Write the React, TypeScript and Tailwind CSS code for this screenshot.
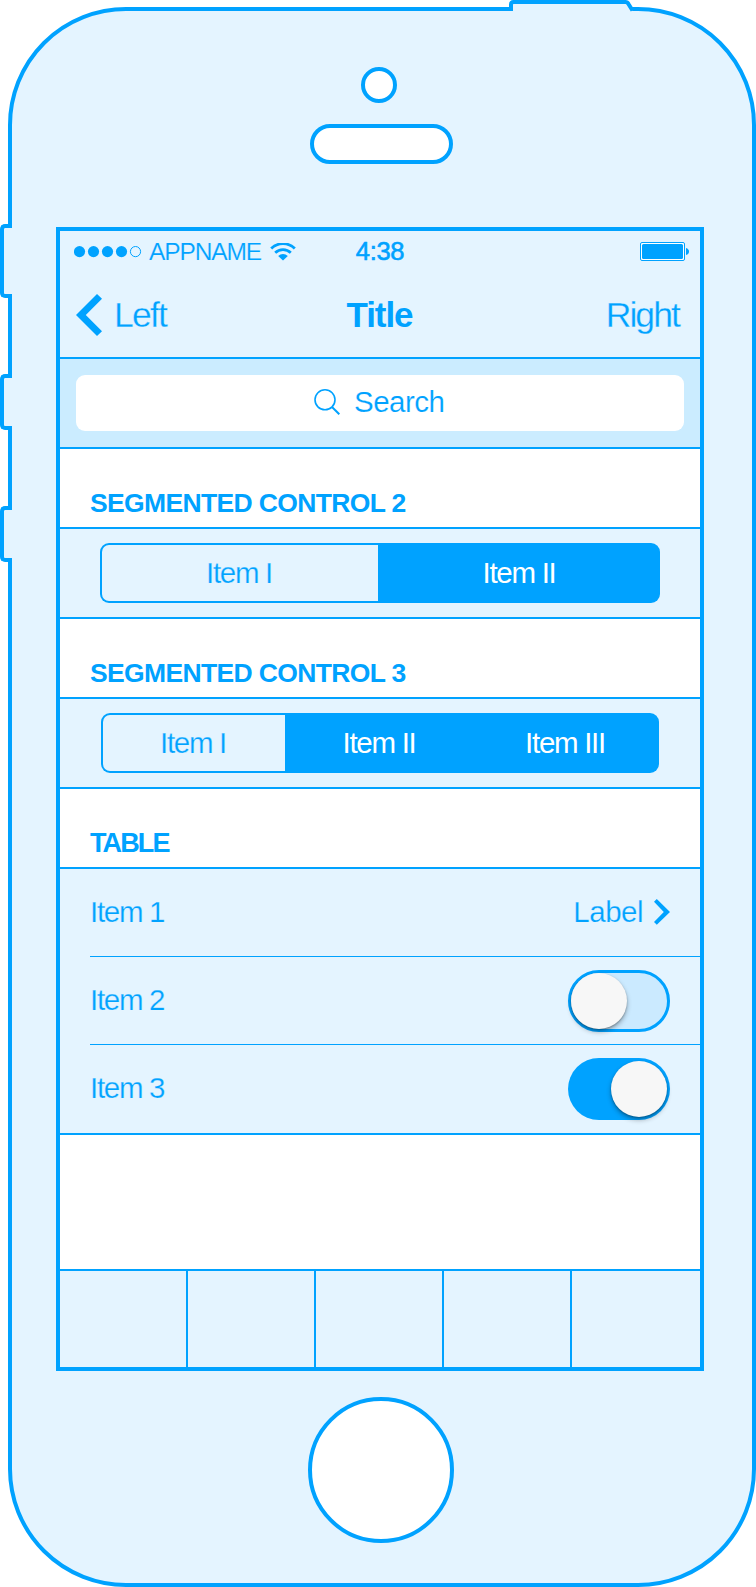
import React from "react";

function StatusBar() {
  return (
    <div className="flex h-[42px] items-center pl-[14px] pr-[11px]">
      <div className="flex flex-1 items-center">
        <svg className="block h-[12px] w-[68px]" viewBox="0 0 68 12" fill="#00a2ff">
          <circle cx="5.5" cy="5.6" r="5.6" />
          <circle cx="19.5" cy="5.6" r="5.6" />
          <circle cx="33.5" cy="5.6" r="5.6" />
          <circle cx="47.5" cy="5.6" r="5.6" />
          <circle cx="61.5" cy="5.6" r="5.1" fill="none" stroke="#00a2ff" strokeWidth="1" />
        </svg>
        <span className="ml-[7px] w-[113px] text-[24.5px] leading-[42px] tracking-[-1.1px] whitespace-nowrap [-webkit-text-stroke:0.15px_#e4f4ff]">
          APPNAME
        </span>
        <svg className="ml-[8px] block h-[18px] w-[26px]" viewBox="0 0 26 18" fill="none" stroke="#00a2ff">
          <path d="M1.2 5.6A16.6 16.6 0 0 1 24.8 5.6" strokeWidth="2.8" />
          <path d="M5.2 9.8A11 11 0 0 1 20.8 9.8" strokeWidth="2.7" />
          <path d="M13 17.4L8.2 13A7 7 0 0 1 17.8 13Z" fill="#00a2ff" stroke="none" />
        </svg>
      </div>
      <span className="mr-[3px] text-[25.5px] leading-[40px] tracking-[-0.3px] pb-[2px] [-webkit-text-stroke:0.6px_#00a2ff]">4:38</span>
      <div className="flex flex-1 justify-end">
        <svg className="-mt-[2px] block h-[19px] w-[49px]" viewBox="0 0 49 19">
          <rect x="0.5" y="0.5" width="44" height="18" rx="1.5" fill="#fff" stroke="#00a2ff" />
          <rect x="2" y="2" width="41" height="15" rx="1.5" fill="#00a2ff" />
          <path d="M46 6Q49 7 49 9.5Q49 12 46 13Z" fill="#00a2ff" />
        </svg>
      </div>
    </div>
  );
}

function NavBar() {
  return (
    <div className="flex h-[84px] items-center pl-[17px] pr-[18px]">
      <div className="flex flex-1 items-center">
        <svg className="-mt-px -ml-px block h-[42px] w-[26px]" viewBox="0 0 26 42" fill="#00a2ff">
          <path d="M21 0L26 4.7L9.8 21L26 37.2L21 42L0 21Z" />
        </svg>
        <span className="ml-[12px] text-[35.5px] leading-[84px] tracking-[-1.8px] [-webkit-text-stroke:0.3px_#e4f4ff]">Left</span>
      </div>
      <span className="text-[35px] leading-[84px] font-bold tracking-[-1.1px]">Title</span>
      <div className="flex flex-1 justify-end">
        <span className="pr-[3px] text-[35.5px] leading-[84px] tracking-[-1.9px] [-webkit-text-stroke:0.3px_#e4f4ff]">Right</span>
      </div>
    </div>
  );
}

function SectionHeading({ tight = false, children }: { tight?: boolean; children: React.ReactNode }) {
  return (
    <div
      className={
        tight
          ? "h-[80px] border-b-2 border-[#00a2ff] bg-white pt-[39px] pl-[30px] text-[27px] leading-[30px] font-bold tracking-[-1.9px]"
          : "h-[80px] border-b-2 border-[#00a2ff] bg-white pt-[39px] pl-[30px] text-[26.5px] leading-[30px] font-bold tracking-[-0.65px]"
      }
    >
      {children}
    </div>
  );
}

function Switch({ on = false }: { on?: boolean }) {
  return (
    <div
      className={
        on
          ? "flex h-[62px] w-[102px] items-center justify-end rounded-full bg-[#00a2ff] px-[3px]"
          : "flex h-[62px] w-[102px] items-center rounded-full border-[3px] border-[#00a2ff] bg-[#cbeaff]"
      }
    >
      <div className="size-[56px] rounded-full bg-[#f7f7f7] shadow-[0_3px_5px_rgba(0,0,0,0.3),0_1px_2px_rgba(0,0,0,0.25)]" />
    </div>
  );
}

const itemText = "text-[29.5px] tracking-[-1.3px]";
const thin = "[-webkit-text-stroke:0.25px_#e4f4ff]";

function Row({ label, last = false, children }: { label: string; last?: boolean; children: React.ReactNode }) {
  return (
    <div
      className={
        last
          ? "ml-[30px] flex h-[88px] items-center justify-between pr-[30px]"
          : "ml-[30px] flex h-[88px] items-center justify-between pr-[30px] shadow-[inset_0_-1px_0_#00a2ff]"
      }
    >
      <span className={`${itemText} ${thin} pb-[2px] leading-[34px]`}>{label}</span>
      {children}
    </div>
  );
}

export default function App() {
  return (
    <div className="relative h-[1587px] w-[756px] bg-white pt-[7px] pl-[8px] font-['Liberation_Sans',Arial,sans-serif] text-[#00a2ff]">
      <div className="flex h-[1580px] w-[748px] flex-col items-center rounded-[118px] border-4 border-[#00a2ff] bg-[#e4f4ff]">
        <div className="mt-[56px] mr-[6px] size-[36px] rounded-full border-4 border-[#00a2ff] bg-white" />
        <div className="mt-[21px] mr-[1px] h-[40px] w-[143px] rounded-full border-4 border-[#00a2ff] bg-white" />

        <div className="mt-[63px] mr-[4px] flex h-[1144px] w-[648px] flex-none flex-col border-4 border-[#00a2ff] bg-white">
          <div className="h-[128px] border-b-2 border-[#00a2ff] bg-[#e4f4ff]">
            <StatusBar />
            <NavBar />
          </div>

          <div className="h-[90px] border-b-2 border-[#00a2ff] bg-[#cbecff] px-[16px] py-[16px]">
            <div className="flex h-[56px] items-center rounded-[9px] bg-white pl-[238px]">
              <svg className="-mt-[2px] block h-[26px] w-[26px]" viewBox="0 0 26 26" fill="none" stroke="#00a2ff">
                <circle cx="11" cy="10.8" r="10" strokeWidth="1.6" />
                <path d="M18 18L25.3 25.3" strokeWidth="2" />
              </svg>
              <span className="ml-[14px] pb-[2px] text-[29.5px] leading-[34px] tracking-[-0.5px] [-webkit-text-stroke:0.2px_#ffffff]">Search</span>
            </div>
          </div>

          <SectionHeading>SEGMENTED CONTROL 2</SectionHeading>
          <div className="h-[90px] border-b-2 border-[#00a2ff] bg-[#e4f4ff] px-[40px] pt-[14px]">
            <div className="flex h-[60px] rounded-[9px] bg-[#00a2ff] p-[2px] leading-[56px]">
              <div className={`${itemText} ${thin} w-[276px] rounded-l-[7px] bg-[#e4f4ff] pr-[2px] text-center`}>Item I</div>
              <div className={`${itemText} flex-1 pl-[2px] text-center text-white`}>Item II</div>
            </div>
          </div>

          <SectionHeading>SEGMENTED CONTROL 3</SectionHeading>
          <div className="h-[90px] border-b-2 border-[#00a2ff] bg-[#e4f4ff] px-[41px] pt-[14px]">
            <div className="flex h-[60px] rounded-[9px] bg-[#00a2ff] p-[2px] leading-[56px]">
              <div className={`${itemText} ${thin} w-[182px] rounded-l-[7px] bg-[#e4f4ff] pr-[2px] text-center`}>Item I</div>
              <div className={`${itemText} w-[188px] text-center text-white`}>Item II</div>
              <div className={`${itemText} flex-1 text-center text-white`}>Item III</div>
            </div>
          </div>

          <SectionHeading tight>TABLE</SectionHeading>
          <div className="border-b-2 border-[#00a2ff] bg-[#e4f4ff]">
            <Row label="Item 1">
              <div className="flex items-center pb-[2px]">
                <span className="pb-px text-[29.5px] leading-[34px] tracking-[-0.5px] [-webkit-text-stroke:0.25px_#e4f4ff]">Label</span>
                <svg className="ml-[11px] block h-[26px] w-[16px]" viewBox="0 0 16 26" fill="#00a2ff">
                  <path d="M2.8 0L16 13L2.8 25.7L0 23L9.8 13L0 2.7Z" />
                </svg>
              </div>
            </Row>
            <Row label="Item 2">
              <Switch />
            </Row>
            <Row label="Item 3" last>
              <Switch on />
            </Row>
          </div>

          <div className="mt-auto flex h-[98px] border-t-2 border-[#00a2ff] bg-[#e4f4ff]">
            <div className="w-[128px] border-r-2 border-[#00a2ff]" />
            <div className="w-[128px] border-r-2 border-[#00a2ff]" />
            <div className="w-[128px] border-r-2 border-[#00a2ff]" />
            <div className="w-[128px] border-r-2 border-[#00a2ff]" />
            <div className="flex-1" />
          </div>
        </div>

        <div className="mt-[26px] mr-[2px] size-[146px] flex-none rounded-full border-4 border-[#00a2ff] bg-white" />
      </div>

      {/* Hardware buttons sit over the body outline */}
      <div className="absolute top-[224px] left-0 h-[74px] w-[12px] rounded-l-[5px] border-4 border-r-0 border-[#00a2ff] bg-[#e4f4ff]" />
      <div className="absolute top-[374px] left-0 h-[56px] w-[12px] rounded-l-[5px] border-4 border-r-0 border-[#00a2ff] bg-[#e4f4ff]" />
      <div className="absolute top-[506px] left-0 h-[56px] w-[12px] rounded-l-[5px] border-4 border-r-0 border-[#00a2ff] bg-[#e4f4ff]" />
      <svg className="absolute top-0 left-[509px] block h-[12px] w-[126px]" viewBox="0 0 126 12">
        <path d="M2 12V4.5Q2 2 4.5 2H116.5Q118.5 2 119.5 4L123.5 11V12Z" fill="#e4f4ff" />
        <path d="M2 11V4.5Q2 2 4.5 2H116.5Q118.5 2 119.5 4L123.5 10.5" fill="none" stroke="#00a2ff" strokeWidth="4" />
      </svg>
    </div>
  );
}
